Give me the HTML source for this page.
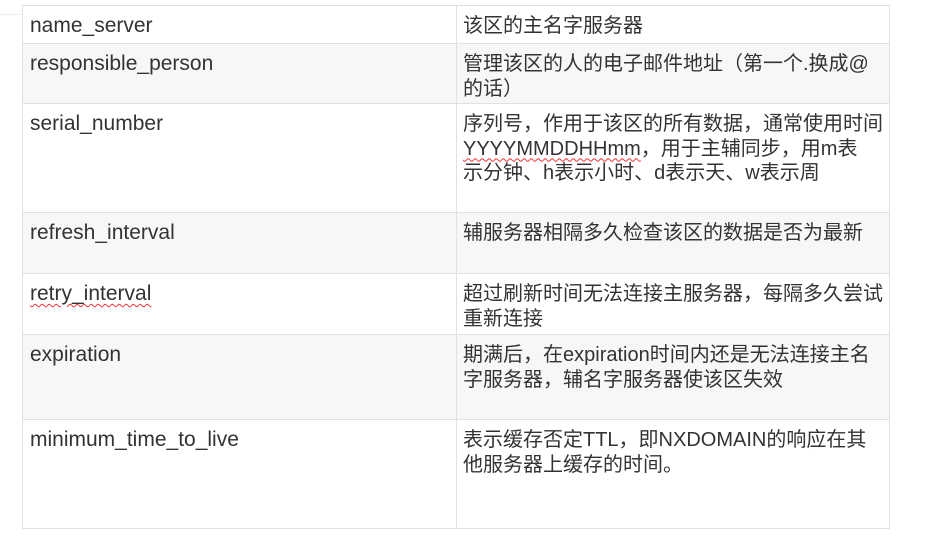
<!DOCTYPE html>
<html><head><meta charset="utf-8"><style>
html,body{margin:0;padding:0;background:#fff;width:928px;height:544px;overflow:hidden}
body{font-family:"Liberation Sans","Noto Sans CJK SC",sans-serif;color:#333;font-size:20px;line-height:24.5px}
.r{position:absolute;left:22px;width:868px;border:1px solid #e1e1e1;border-bottom:none;box-sizing:border-box}
.g{background:#f7f7f7}
.c1{position:absolute;left:7px;top:8px;white-space:nowrap;font-size:21px}
.c2{position:absolute;left:440px;top:8px;width:440px;white-space:nowrap;font-size:20px}
.v{position:absolute;left:456px;top:5px;width:1px;height:523px;background:#e1e1e1}
.sq{text-decoration:underline wavy #e33;text-decoration-thickness:1px;text-underline-offset:3px}
</style></head><body>
<div style="position:absolute;left:0;top:14px;width:22px;height:1px;background:#eee"></div>
<div class="r" style="top:5px;height:38px"><div class="c1">name_server</div><div class="c2">该区的主名字服务器</div></div>
<div class="r g" style="top:43px;height:60px"><div class="c1">responsible_person</div><div class="c2">管理该区的人的电子邮件地址（第一个.换成@<br>的话）</div></div>
<div class="r" style="top:103px;height:109px"><div class="c1">serial_number</div><div class="c2">序列号，作用于该区的所有数据，通常使用时间<br><span class="sq">YYYYMMDDHHmm</span>，用于主辅同步，用m表<br>示分钟、h表示小时、d表示天、w表示周</div></div>
<div class="r g" style="top:212px;height:61px"><div class="c1">refresh_interval</div><div class="c2">辅服务器相隔多久检查该区的数据是否为最新</div></div>
<div class="r" style="top:273px;height:61px"><div class="c1"><span class="sq">retry_interval</span></div><div class="c2">超过刷新时间无法连接主服务器，每隔多久尝试<br>重新连接</div></div>
<div class="r g" style="top:334px;height:85px"><div class="c1">expiration</div><div class="c2">期满后，在expiration时间内还是无法连接主名<br>字服务器，辅名字服务器使该区失效</div></div>
<div class="r" style="top:419px;height:110px;border-bottom:1px solid #e1e1e1"><div class="c1">minimum_time_to_live</div><div class="c2">表示缓存否定TTL，即NXDOMAIN的响应在其<br>他服务器上缓存的时间。</div></div>
<div class="v"></div>
</body></html>
